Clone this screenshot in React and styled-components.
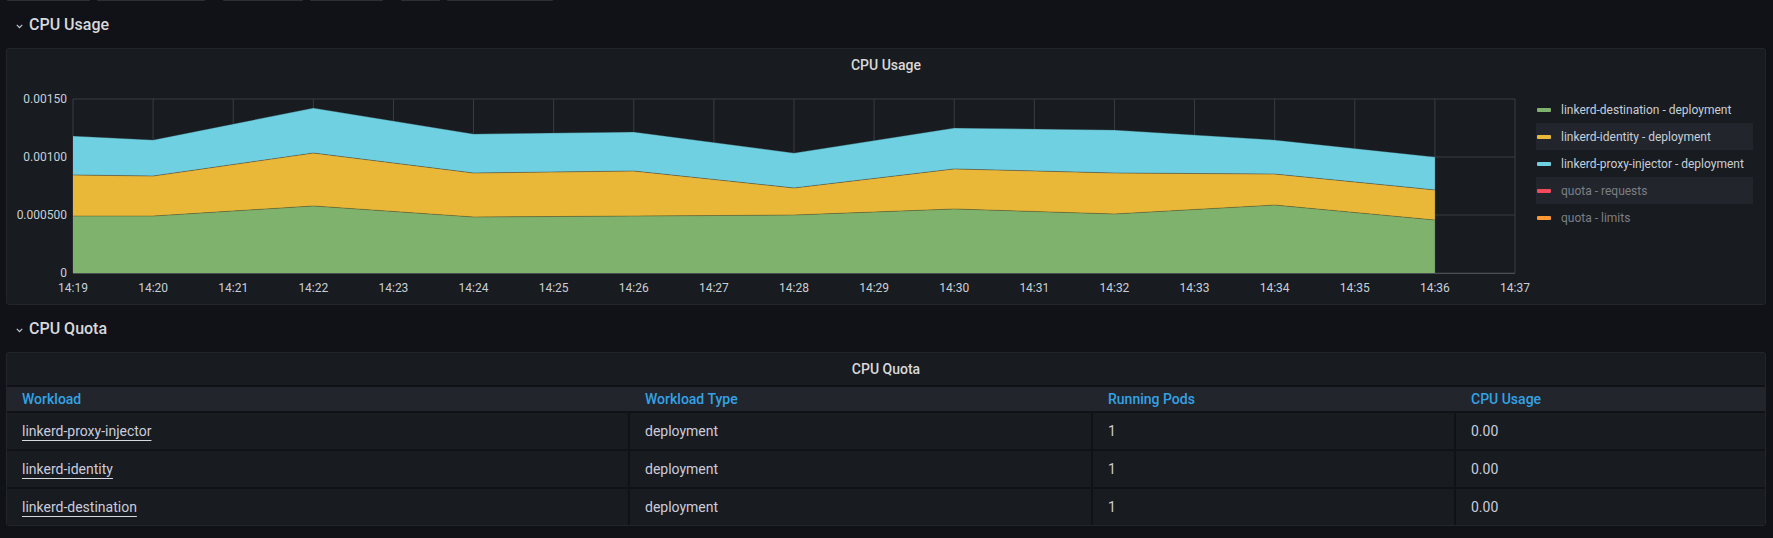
import React from "react";
import styled, { createGlobalStyle } from "styled-components";

const GlobalStyle = createGlobalStyle`
  html, body {
    margin: 0;
    padding: 0;
    background: #111217;
  }
  body {
    font-family: Roboto, "Liberation Sans", sans-serif;
    color: #ccccdc;
    overflow: hidden;
  }
`;

const Page = styled.div`
  width: 1773px;
  height: 538px;
  overflow: hidden;
  box-sizing: border-box;
  padding: 0 7px 0 6px;
`;

const Toolbar = styled.div`
  display: flex;
  gap: 16px;
  height: 32px;
  margin-top: -31px;
`;

const VarGroup = styled.div`
  display: flex;
  gap: 5px;
`;

const VarBox = styled.div`
  width: ${(p) => p.$w}px;
  height: 32px;
  box-sizing: border-box;
  background: #0b0c0e;
  border: 1px solid #2c2f35;
  border-radius: 2px;
`;

const RowHeader = styled.div`
  display: flex;
  align-items: center;
  gap: 6px;
  height: 47px;
  padding-left: 10px;
  font-size: 16px;
  font-weight: 500;
  color: #d8d9da;
`;

const Panel = styled.div`
  background: #181b1f;
  border: 1px solid #22252b;
  border-radius: 3px;
  overflow: hidden;
`;

const PanelTitle = styled.div`
  height: ${(p) => p.$h || 31}px;
  display: flex;
  align-items: center;
  justify-content: center;
  font-size: 14px;
  font-weight: 500;
  color: #d8d9da;
`;

const ChartBody = styled.div`
  display: flex;
  height: 224px;
`;

const Legend = styled.div`
  display: flex;
  flex-direction: column;
  width: 217px;
  margin-top: 16px;
`;

const LegendRow = styled.div`
  display: flex;
  align-items: center;
  height: 27px;
  font-size: 12px;
  color: ${(p) => (p.$dim ? "#7b7f88" : "#c7d0d9")};
  &:nth-child(even) {
    background: #22252b;
  }
`;

const Swatch = styled.span`
  width: 14px;
  height: 4px;
  margin: 0 10px 0 1px;
  background: ${(p) => p.$color};
  border-radius: 1px;
`;

const Table = styled.div`
  display: flex;
  flex-direction: column;
  gap: 2px;
  padding-top: 2px;
  background: #111217;
`;

const cols = "621px 461px 361px 1fr";

const HeaderRow = styled.div`
  display: grid;
  grid-template-columns: ${cols};
  column-gap: 2px;
  height: 24px;
  align-items: center;
  background: #22252b;
  font-size: 14px;
  font-weight: 500;
  color: #33a2e5;
`;

const DataRow = styled.div`
  display: grid;
  grid-template-columns: ${cols};
  column-gap: 2px;
  height: 36px;
`;

const Cell = styled.div`
  display: flex;
  align-items: center;
  padding-left: 15px;
  background: ${(p) => (p.$head ? "transparent" : "#181b1f")};
  font-size: 14px;
`;

const Link = styled.span`
  text-decoration: underline;
  text-decoration-color: #d8d9da;
  text-underline-offset: 4px;
  color: #ccccdc;
`;

const Chevron = () => (
  <svg width="7" height="5" viewBox="0 0 7 5" style={{ marginTop: 3 }}>
    <path d="M0.8 0.8 L3.5 3.6 L6.2 0.8" fill="none" stroke="#c7d0d9" strokeWidth="1.1" />
  </svg>
);

// stacked tops, in units of 0.001
const points = [
  { m: 0, g: 0.491, y: 0.845, b: 1.181 },
  { m: 1, g: 0.491, y: 0.836, b: 1.147 },
  { m: 3, g: 0.578, y: 1.034, b: 1.422 },
  { m: 5, g: 0.483, y: 0.862, b: 1.198 },
  { m: 7, g: 0.491, y: 0.879, b: 1.216 },
  { m: 9, g: 0.5, y: 0.733, b: 1.034 },
  { m: 11, g: 0.552, y: 0.897, b: 1.25 },
  { m: 13, g: 0.509, y: 0.862, b: 1.233 },
  { m: 15, g: 0.586, y: 0.853, b: 1.147 },
  { m: 17, g: 0.457, y: 0.716, b: 1.0 },
];

const W = 1529;
const H = 224;
const X0 = 66;
const X1 = 1508;
const Y0 = 19;
const Y1 = 193;
const xAt = (m) => X0 + ((X1 - X0) * m) / 18;
const yAt = (v) => Y1 - ((Y1 - Y0) * v) / 1.5;

const band = (top, bottom) => {
  const up = points.map((p) => `${xAt(p.m)},${yAt(top(p))}`);
  const down = points
    .slice()
    .reverse()
    .map((p) => `${xAt(p.m)},${yAt(bottom(p))}`);
  return `M${up.join(" L")} L${down.join(" L")} Z`;
};

const line = (top) => "M" + points.map((p) => `${xAt(p.m)},${yAt(top(p))}`).join(" L");

const grid = "#3a3d43";
const label = "#c7d0d9";

const Chart = () => {
  const minutes = Array.from({ length: 19 }, (_, i) => i);
  const yTicks = [
    { v: 1.5, t: "0.00150" },
    { v: 1.0, t: "0.00100" },
    { v: 0.5, t: "0.000500" },
    { v: 0, t: "0" },
  ];
  return (
    <svg width={W} height={H} style={{ flex: "none" }} fontFamily="Roboto, sans-serif" fontSize="12">
      {minutes.map((m) => (
        <line key={"v" + m} x1={xAt(m)} x2={xAt(m)} y1={Y0} y2={Y1} stroke={grid} strokeWidth="1" />
      ))}
      {yTicks.map((t) => (
        <line key={"h" + t.v} x1={X0} x2={X1} y1={yAt(t.v)} y2={yAt(t.v)} stroke={grid} strokeWidth="1" />
      ))}
      <path d={band((p) => p.b, (p) => p.y)} fill="#6ed0e0" />
      <path d={band((p) => p.y, (p) => p.g)} fill="#eab839" />
      <path d={band((p) => p.g, () => 0)} fill="#7eb26d" />
      <path d={line((p) => p.b)} fill="none" stroke="rgba(40,60,70,0.35)" strokeWidth="1" />
      <path d={line((p) => p.y)} fill="none" stroke="rgba(60,60,70,0.45)" strokeWidth="1" />
      <path d={line((p) => p.g)} fill="none" stroke="rgba(90,80,40,0.45)" strokeWidth="1" />
      <line x1={X0} x2={X1} y1={Y1 + 0.5} y2={Y1 + 0.5} stroke="#4a4d54" strokeWidth="1" />
      {yTicks.map((t) => (
        <text key={"yl" + t.v} x={X0 - 6} y={yAt(t.v) + 4} textAnchor="end" fill={label}>
          {t.t}
        </text>
      ))}
      {minutes.map((m) => (
        <text key={"xl" + m} x={xAt(m)} y={212} textAnchor="middle" fill={label}>
          {`14:${19 + m}`}
        </text>
      ))}
    </svg>
  );
};

const series = [
  { name: "linkerd-destination - deployment", color: "#7eb26d" },
  { name: "linkerd-identity - deployment", color: "#eab839" },
  { name: "linkerd-proxy-injector - deployment", color: "#6ed0e0" },
  { name: "quota - requests", color: "#f2495c", dim: true },
  { name: "quota - limits", color: "#ff9830", dim: true },
];

const rows = ["linkerd-proxy-injector", "linkerd-identity", "linkerd-destination"];

export default function App() {
  return (
    <Page>
      <GlobalStyle />
      <Toolbar>
        <VarGroup>
          <VarBox $w={85} />
          <VarBox $w={110} />
        </VarGroup>
        <VarGroup>
          <VarBox $w={82} />
          <VarBox $w={75} />
        </VarGroup>
        <VarGroup>
          <VarBox $w={41} />
          <VarBox $w={108} />
        </VarGroup>
      </Toolbar>

      <RowHeader>
        <Chevron />
        CPU Usage
      </RowHeader>
      <Panel>
        <PanelTitle>CPU Usage</PanelTitle>
        <ChartBody>
          <Chart />
          <Legend>
            {series.map((s) => (
              <LegendRow key={s.name} $dim={s.dim}>
                <Swatch $color={s.color} />
                {s.name}
              </LegendRow>
            ))}
          </Legend>
        </ChartBody>
      </Panel>

      <RowHeader>
        <Chevron />
        CPU Quota
      </RowHeader>
      <Panel>
        <PanelTitle $h={32}>CPU Quota</PanelTitle>
        <Table>
          <HeaderRow>
            <Cell $head>Workload</Cell>
            <Cell $head>Workload Type</Cell>
            <Cell $head>Running Pods</Cell>
            <Cell $head>CPU Usage</Cell>
          </HeaderRow>
          {rows.map((r) => (
            <DataRow key={r}>
              <Cell>
                <Link>{r}</Link>
              </Cell>
              <Cell>deployment</Cell>
              <Cell>1</Cell>
              <Cell>0.00</Cell>
            </DataRow>
          ))}
        </Table>
      </Panel>
    </Page>
  );
}
